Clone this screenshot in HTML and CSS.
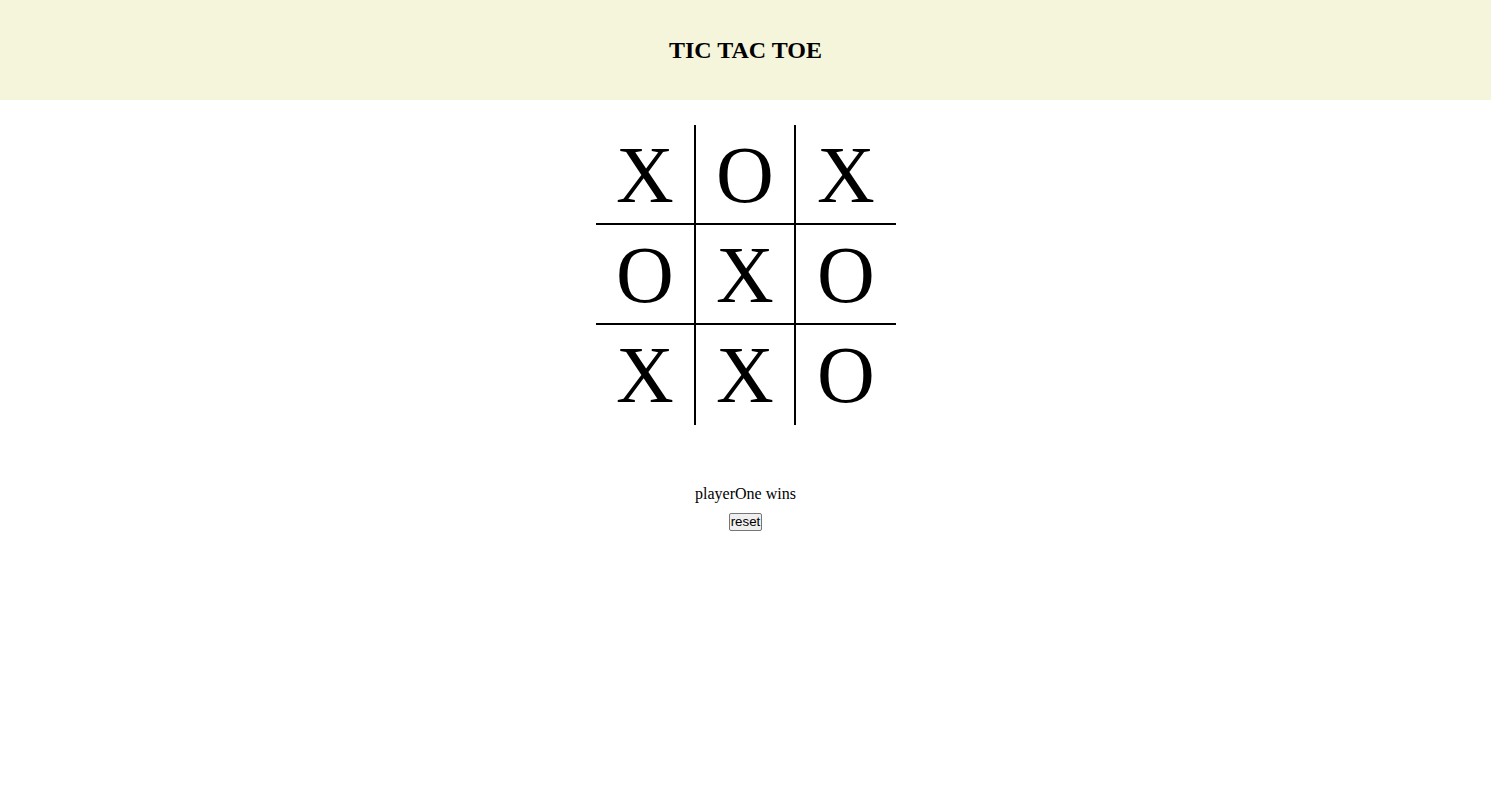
FILE: index.html
```html
<!DOCTYPE html>
<html>
<head>
<meta charset="utf-8">
<link rel="stylesheet" href="styles.css">
</head>
<body>
<header class="header"><h1 class="title">TIC TAC TOE</h1></header>
<main class="main">
  <div class="board">
    <div class="cell br bb">X</div>
    <div class="cell br bb">O</div>
    <div class="cell bb">X</div>
    <div class="cell br bb">O</div>
    <div class="cell br bb">X</div>
    <div class="cell bb">O</div>
    <div class="cell br">X</div>
    <div class="cell br">X</div>
    <div class="cell">O</div>
  </div>
  <p class="status">playerOne wins</p>
  <button class="reset">reset</button>
</main>
</body>
</html>
```
FILE: styles.css
```css
html, body {
  margin: 0;
  padding: 0;
  background: #ffffff;
  font-family: "Liberation Serif", "Times New Roman", serif;
  color: #000;
}
.header {
  height: 100px;
  background: #f5f5dc;
  display: flex;
  align-items: center;
  justify-content: center;
}
.title {
  margin: 0;
  font-size: 24px;
  font-weight: bold;
  line-height: 28px;
}
.main {
  display: flex;
  flex-direction: column;
  align-items: center;
}
.board {
  margin-top: 25px;
  display: grid;
  grid-template-columns: repeat(3, 100px);
  grid-template-rows: repeat(3, 100px);
  margin-left: 1px;
}
.cell {
  box-sizing: border-box;
  font-size: 80px;
  line-height: 100px;
  text-align: center;
}
.br { border-right: 2px solid #000; }
.bb { border-bottom: 2px solid #000; }
.status {
  margin: 60px 0 0;
  font-size: 16px;
  line-height: 18px;
}
.reset {
  margin-top: 10px;
  font-family: "Liberation Sans", Arial, sans-serif;
  font-size: 13.333px;
  line-height: 14px;
  padding: 1px 1px;
  border: 1px solid #767676;
  border-radius: 2px;
  background: #efefef;
  color: #000;
}
```
